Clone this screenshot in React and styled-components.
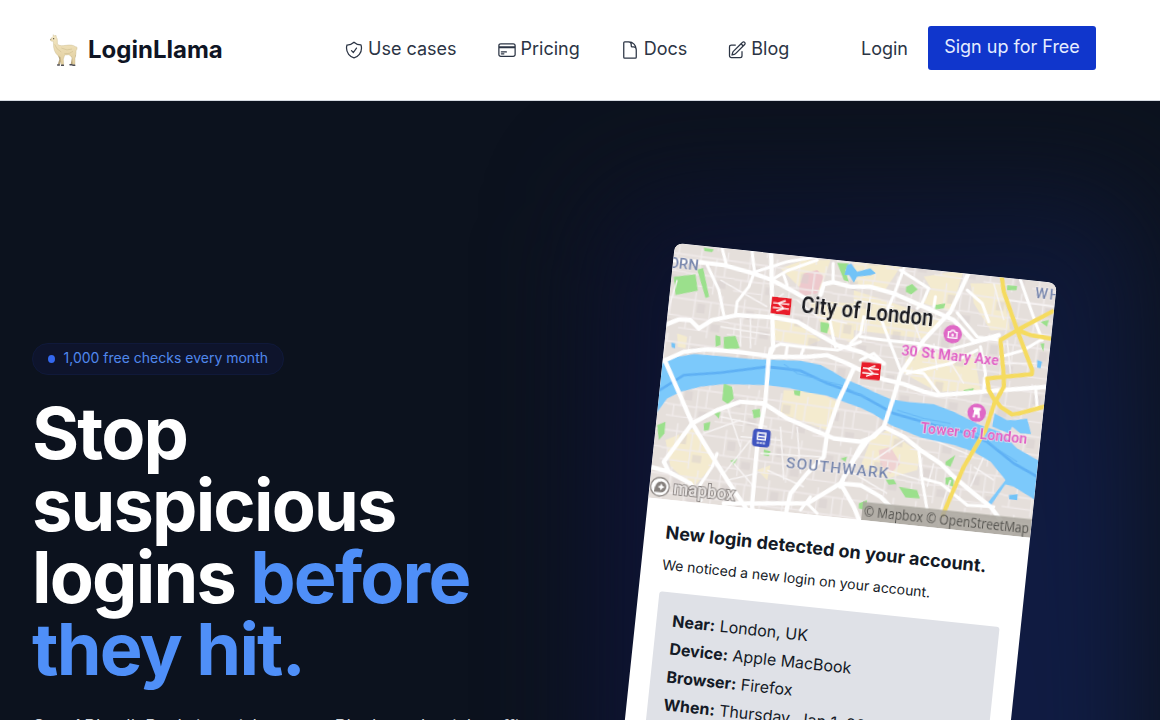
import React from "react";
import styled, { createGlobalStyle } from "styled-components";
import {
  HiOutlineShieldCheck,
  HiOutlineCreditCard,
  HiOutlineDocument,
  HiOutlinePencilSquare,
} from "react-icons/hi2";

const GlobalStyle = createGlobalStyle`
  *, *::before, *::after { box-sizing: border-box; }
  body {
    margin: 0;
    background: #0c121e;
    font-family: Inter, "Liberation Sans", sans-serif;
    overflow: hidden;
  }
  h1, h2, p { margin: 0; }
`;

const Page = styled.div`
  height: 720px;
  overflow: hidden;
  display: flex;
  flex-direction: column;
`;

const Header = styled.header`
  flex: none;
  height: 101px;
  display: flex;
  align-items: flex-start;
  background: #fff;
  border-bottom: 1px solid #d5dae1;
  padding: 26px 64px 0 48px;
  color: #2b3444;
  font-size: 18px;
  line-height: 28px;
`;

const Brand = styled.a`
  width: 296px;
  display: flex;
  align-items: center;
  gap: 8px;
  padding-top: 8px;
  color: #0f1524;
  font-size: 24px;
  line-height: 32px;
  font-weight: 700;
`;

const Nav = styled.nav`
  display: flex;
  gap: 40px;
  padding-top: 9px;
`;

const NavLink = styled.a`
  display: flex;
  align-items: center;
  gap: 4px;

  svg {
    width: 20px;
    height: 20px;
    margin-top: 2px;
  }
`;

const Account = styled.div`
  margin-left: auto;
  display: flex;
  gap: 20px;
`;

const LoginLink = styled.a`
  padding-top: 9px;
`;

const SignUp = styled.a`
  width: 168px;
  height: 44px;
  border-radius: 3px;
  background: #1036cc;
  color: #e6edff;
  text-align: center;
  line-height: 42px;
  white-space: nowrap;
`;

const Hero = styled.main`
  flex: 1;
  min-height: 0;
  display: flex;
  overflow: hidden;
  background: #0c121e;
  padding-left: 32px;
`;

const Pitch = styled.section`
  width: 516px;
  padding-top: 242px;
  flex: none;
`;

const Badge = styled.div`
  display: inline-flex;
  align-items: center;
  gap: 8px;
  width: 252px;
  height: 32px;
  padding: 0 15px;
  border: 1px solid #10193a;
  border-radius: 16px;
  background: #0e142c;
  color: #5088ec;
  font-size: 14px;
  line-height: 20px;
  white-space: nowrap;
`;

const BadgeText = styled.span`
  padding: 0 0 2px 0.5px;
`;

const Dot = styled.i`
  width: 8px;
  height: 8px;
  border-radius: 50%;
  background: #3468ee;
`;

const Title = styled.h1`
  margin-top: 22px;
  color: #fff;
  font-size: 72px;
  line-height: 72px;
  font-weight: 700;
  letter-spacing: -1.8px;

  em {
    font-style: normal;
    color: #4f8ff8;
  }
`;

const Lead = styled.p`
  margin-top: 28px;
  color: #d1d5db;
  font-size: 18px;
  line-height: 28px;
  white-space: nowrap;
`;

const Showcase = styled.section`
  position: relative;
  flex: 1;
  padding: 142px 0 0 126.5px;
`;

const Glow = styled.div`
  position: absolute;
  left: 50px;
  top: 90px;
  width: 545px;
  height: 800px;
  border-radius: 60px;
  background:
    linear-gradient(180deg, rgba(12, 18, 30, 0.4), rgba(12, 18, 30, 0) 300px),
    linear-gradient(100deg, #0d1131, #111f48);
  filter: blur(54px);
`;

const Card = styled.article`
  position: relative;
  width: 384px;
  height: 620px;
  overflow: hidden;
  border-radius: 8px;
  background: #fff;
  transform: rotate(6deg);
  transform-origin: 0 0;
  color: #141a26;
`;

const MapArt = styled.svg`
  display: block;
  width: 384px;
  height: 256px;
  font-family: Roboto, sans-serif;
`;

const CardBody = styled.div`
  padding: 19px 21px;
`;

const CardTitle = styled.h2`
  font-size: 18px;
  line-height: 28px;
  font-weight: 700;
  white-space: nowrap;
`;

const CardNote = styled.p`
  margin-top: 8px;
  font-size: 14px;
  line-height: 20px;
`;

const Details = styled.div`
  margin-top: 17px;
  height: 220px;
  padding: 14px 16px;
  border-radius: 3px;
  background: #dfe1e7;
  font-size: 16px;
  line-height: 28px;
`;

const Detail = styled.p`
  white-space: nowrap;
`;

function Llama() {
  return (
    <svg width="32" height="32" viewBox="54 42 96 96">
      <defs>
        <linearGradient id="wool" x1="0" y1="0" x2="0" y2="1">
          <stop offset="0" stopColor="#f4e8c4" />
          <stop offset="1" stopColor="#e0cc9c" />
        </linearGradient>
      </defs>
      <path d="M118 100L126 113L122 133H129L138 104ZM82 100L88 118L83 134H90L98 105Z" fill="#b5a37c" />
      <path d="M69 50L70 44L74 48L78 46L79 52C83 56 82 64 82 72C88 79 98 77 108 76C119 74 131 75 136 80C143 79 142 88 138 92C139 102 136 108 135 114L135 134H128L126 112L117 104L104 105L100 118L101 135H94L91 112C80 106 73 96 71 82L70 64L63 63C60 60 61 55 66 53Z" fill="url(#wool)" stroke="#c6b588" strokeWidth="1.2" />
      <path d="M74 73Q78 88 94 96M94 84Q112 94 126 87M103 101Q119 103 129 94" fill="none" stroke="#cfbd90" strokeWidth="1.8" />
      <circle cx="71" cy="56" r="1.8" fill="#3e3833" />
      <path d="M61 59L64 58" stroke="#74675b" strokeWidth="2.2" />
      <path d="M83 135H88M95 136H100M120 134H126M129 136H134" stroke="#4f4f56" strokeWidth="4.5" strokeLinecap="round" />
    </svg>
  );
}

const majorRoads = [
  "M95 60L170 65L250 75L340 100L395 120L460 155L490 172",
  "M392 40L395 200L398 325L385 350L375 480L350 620L335 790V830",
  "M80 252L115 238L150 240L175 265L215 240L290 225L400 232L470 245L520 275L590 315L660 335L730 370",
  "M70 362L130 335L200 328L290 335L400 350L500 350L560 345L620 370L660 390L730 418L790 432L850 455L890 465L960 460L1060 452L1220 440",
  "M75 365L125 480L155 550L210 640L260 720L320 810",
  "M155 550L230 510L300 485L370 490L440 535L520 570L580 595L660 605L700 590L730 560",
  "M155 550L70 665L85 695L150 730L180 780M30 680L85 695",
  "M640 385L595 480L560 580L550 650L500 700L450 760L436 820",
  "M984 100L930 215L850 300L780 400L760 470L730 560L660 620L610 710L600 740",
  "M540 165L550 132L578 126L630 140L690 140L760 160L850 200L940 240L1000 305L1075 285",
  "M730 560L790 590L840 630L900 670L940 710L1000 760L1050 800L1080 840",
  "M250 790H500L600 730L640 660L675 610",
  "M600 730L660 735L720 770L755 805M600 730L640 800L660 850",
];

const minorRoads = [
  "M200 75L235 150L250 225M340 100L325 140L290 185L285 225",
  "M245 25L258 75M335 35L342 95M342 96L440 65L530 50M400 115L440 92L530 60M430 105L440 135",
  "M578 70L578 125M630 310L660 280L670 230",
  "M385 350L390 325L420 312L480 320L590 330L660 305M440 320L435 350M490 322L480 350",
  "M568 240L578 290L585 320M660 360L700 340L730 370",
  "M790 85L760 165L725 245L755 325L780 390L850 400L900 465",
  "M780 90L865 145L845 190L830 205M885 170L880 200",
  "M980 150L1025 190L1045 245M950 218L1010 290L1075 300",
  "M660 290L730 300L830 310L920 330L1070 290M800 400L930 370L1010 330M1020 320L1035 400L1030 450",
  "M1140 120L1175 220L1205 300M1080 350L1150 330L1200 300M1185 440L1190 500L1170 510",
  "M230 640L215 680L175 740M835 630L845 720L860 810M845 715L900 730L980 795L1060 800",
  "M500 790L530 820M480 810L510 770",
];

const laneRoads = [
  "M240 120L380 200M300 235V320M330 235V325M240 260L390 285M110 120L80 220M430 160L390 190M470 180L530 230L620 250",
  "M640 180L760 200M690 170L670 280M800 190L840 300M840 220L900 240M920 350L970 430M880 310L890 390",
  "M1060 130L1090 240M1100 180L1240 200M1090 370L1190 370M1100 300L1110 400",
  "M240 530L380 560M260 500L300 620M300 590L420 600M190 580L300 540M330 600L250 700M420 560L430 720M470 560L480 700M360 640L540 650",
  "M280 670L340 740M260 720L350 700M380 690L490 740M700 660L790 600M740 690L840 720M640 700L740 760M880 670L860 740M930 720L900 810M1000 680L1060 720M1030 650L990 740M880 600L1000 650",
];

const yellowRoads = [
  "M1084 110L1090 155L1130 270L1175 390L1174 402L1040 415L1045 450L1065 485L1090 440V410L1080 300L1130 270L1240 212",
  "M1130 270L1170 285L1240 297",
  "M1065 480L1080 500L1115 523L1140 519L1240 492",
  "M1065 480L1035 570L970 680L930 770L905 830",
];

const parks = [
  "M100 110L165 103L172 152L105 165Z", "M170 88L188 84L206 170L195 174Z",
  "M225 285L240 290L240 315L225 320ZM250 290L285 287L298 325L250 328Z",
  "M190 22L220 28L215 36L192 33ZM590 68L625 70L615 90L625 125L610 120Z",
  "M797 140L815 132L832 148L812 163L796 155Z", "M1100 135L1130 138L1128 150L1100 150Z",
  "M540 245L568 250L560 280L540 275Z", "M50 555L75 545L72 580L55 600Z",
  "M250 430L275 440L280 475L262 492L245 480Z", "M190 550L210 545L205 570L190 572Z",
  "M335 510L358 506L360 530L340 535Z", "M460 450L480 452L478 468L462 464Z",
  "M370 628L390 634L385 648L370 646ZM270 662L290 655L280 675Z",
  "M915 665L945 645L930 680L915 675ZM915 712L940 710L938 740L915 732Z",
  "M735 718L760 718L768 732L745 734ZM775 740L830 750L838 775L795 772Z",
  "M970 450L1000 444L995 462L970 460ZM1200 245L1225 240L1220 260ZM1200 310L1212 310L1208 335Z",
  "M880 195L915 190L910 205L885 208ZM220 520L240 515L235 535Z",
  "M655 790L680 780L675 810L655 805ZM600 655L620 650L615 665Z",
];

const creamAreas = [
  "M75 600L160 565L222 650L205 690L160 740L90 680Z",
  "M420 85L490 60L570 60L540 150L500 165L470 135Z",
  "M400 240L470 250L540 300L500 318L400 300Z",
  "M640 50L780 80L730 155L640 130Z",
  "M850 110L970 90L930 215L850 190L872 145Z",
  "M990 130L1080 130L1110 270L1050 270L1000 190Z",
  "M640 150L910 240L850 295L640 270Z",
  "M430 450L530 455L590 485L560 570L420 520Z",
  "M800 330L1000 340L1020 450L890 455L790 400Z",
  "M690 600L740 570L840 640L830 690L740 715L660 680Z",
  "M350 690L390 675L380 720ZM110 280L140 290L135 325L112 320Z",
  "M500 180L640 190L640 310L560 280Z",
];

function RailMark({ x, y }) {
  return (
    <g transform={`translate(${x} ${y})`}>
      <rect x="-10" y="-8.5" width="20" height="17" rx="0.8" fill="#e91f2b" />
      <path d="M-8 -2.2H8M-8 2.4H8M4 -5.5L-3 -2.2L3 2.4L-4 5.5" fill="none" stroke="#fff" strokeWidth="1.3" />
    </g>
  );
}

function LondonMap() {
  return (
    <MapArt viewBox="0 0 384 256">
      <defs>
        <pattern id="streets" width="148" height="132" patternUnits="userSpaceOnUse" patternTransform="rotate(8)">
          <path d="M0 24H148M0 78H88M40 0V78M88 24V132M120 0V24M0 112H88M20 78V112M116 76V24M88 76H148" fill="none" stroke="#f1ecec" strokeWidth="4" />
          <path d="M48 32H72V60H48ZM96 88H124V110H96Z" fill="#d8d0cf" opacity=".5" />
        </pattern>
        <filter id="soften" x="0" y="0" width="1" height="1">
          <feGaussianBlur stdDeviation="0.4" edgeMode="duplicate" />
        </filter>
      </defs>
      <g filter="url(#soften)">
        <rect width="384" height="256" fill="#e5dfdb" />
        <g transform="translate(1 0) rotate(-6) translate(-35.5 -3) scale(.33333)">
          {creamAreas.map((d) => <path key={d} d={d} fill="#f4ebcf" />)}
          <path d="M490 100L530 90L550 110L530 160L480 168L475 145Z" fill="#edc9cd" />
          <path d="M715 630L750 620L780 670L750 700L720 675Z" fill="#efd2d2" />
          <rect x="-50" y="-50" width="1350" height="950" fill="url(#streets)" />
          {parks.map((d) => <path key={d} d={d} fill="#9be08c" />)}
          <g fill="none" stroke="#f7f4f4" strokeWidth="4.5">
            {laneRoads.map((d) => <path key={d} d={d} />)}
          </g>
          <path
            d="M40 374L100 352L160 342L240 348L330 357L480 362L540 374L580 396L610 415L660 436L700 455L750 477L800 485L880 492L940 515L1020 555L1080 575L1130 625L1200 665V790L1120 740L1095 733L1048 800L1038 793L1095 720L1050 665L1000 635L940 615L840 592L750 555L700 522L660 503L600 482L560 467L500 457L450 445L380 435L250 432L180 440L120 455L80 475L40 530Z"
            fill="#7bc9fb"
          />
          <path d="M50 455L130 405L240 398L380 380L480 392L560 430L660 465L760 520L880 555L950 570L1040 605L1120 670L1200 715" fill="none" stroke="#5eb0f4" strokeWidth="8" />
          <path d="M430 372L470 400L600 435L680 475M770 510L850 535L930 550M1000 570L1060 620L1130 665" fill="none" stroke="#67b7f5" strokeWidth="3" />
          <path d="M1062 520L1100 540L1125 540L1160 535L1172 582L1140 580L1115 560L1105 580L1055 560Z" fill="#7bc9fb" />
          <path d="M620 75L632 70L650 95L690 85L706 100L690 106L650 110L640 128L626 105L612 104ZM1105 765L1132 762L1130 780L1106 778ZM92 308L104 310L104 325L94 322ZM1190 360L1205 365L1200 385L1190 382Z" fill="#72c3f7" />
          <g fill="none" stroke="#fff" strokeLinejoin="round" strokeLinecap="round">
            {majorRoads.map((d) => <path key={d} d={d} strokeWidth="13" />)}
            {minorRoads.map((d) => <path key={d} d={d} strokeWidth="9" />)}
          </g>
          <g fill="none" stroke="#f5db5f" strokeWidth="13" strokeLinejoin="round">
            {yellowRoads.map((d) => <path key={d} d={d} />)}
          </g>
        </g>

        <g transform="translate(.9 0)">
          <g fill="#7585ad" fontSize="14.5" fontWeight="500" stroke="#f0ecea" strokeWidth="1" paintOrder="stroke">
            <text x="-5" y="25" textLength="30" lengthAdjust="spacingAndGlyphs">ORN</text>
            <text x="362.5" y="17" letterSpacing="1.5">WH</text>
            <text x="132.5" y="212.5" fontSize="15.5" textLength="103" lengthAdjust="spacing">SOUTHWARK</text>
          </g>
          <text x="131" y="56" fontSize="23" fontWeight="700" fill="#1a1b20" stroke="#fff" strokeWidth="1.2" paintOrder="stroke" textLength="133" lengthAdjust="spacingAndGlyphs">City of London</text>
          <g fill="#e062c6" fontSize="15.5" fontWeight="700" stroke="#f6e8ee" strokeWidth="1" paintOrder="stroke">
            <text x="235.5" y="88" textLength="98" lengthAdjust="spacingAndGlyphs">30 St Mary Axe</text>
            <text x="262.5" y="163.5" fontSize="15" textLength="107.5" lengthAdjust="spacingAndGlyphs">Tower of London</text>
          </g>
          <RailMark x={111.2} y={51.4} />
          <RailMark x={207.1} y={106.9} />
          <g transform="translate(284.8 61.6)">
            <circle r="9.3" fill="#df68c6" />
            <path d="M-4.3 3.7V-2H-2.5L-1 -3.8H1L2.5 -2H4.3V3.7Z" fill="none" stroke="#fff" strokeWidth="1.3" />
            <circle cy="1" r="1.3" fill="#fff" />
          </g>
          <g transform="translate(316.9 137.3)">
            <circle r="9.3" fill="#df68c6" />
            <path d="M-3.7 -5H3.7V-2.5H2.6L3.6 5H1.5V2H-1.5V5H-3.6L-2.6 -2.5H-3.7Z" fill="#fff" />
          </g>
          <g transform="translate(105.4 185)">
            <rect x="-9" y="-9" width="18" height="18" rx="4" fill="#4055c0" />
            <path d="M-4 -5H4V1.5H-4ZM-4 -1.5H4" fill="none" stroke="#fff" strokeWidth="1.3" />
            <path d="M-4 5H4" stroke="#c8cfee" strokeWidth="2" strokeDasharray="2 1" />
          </g>
        </g>
        <circle cx="10.5" cy="244" r="9.3" fill="#fff" stroke="#8d8784" strokeWidth="1.4" />
        <path d="M5 249.5Q5 238.5 11.5 238.5A5.3 5.3 0 0 1 11.5 249.5Z" fill="#85807d" />
        <path d="M11.8 240.5L12.9 243L15.3 244L12.9 245.2L11.8 247.5L10.7 245.2L8.3 244L10.7 243Z" fill="#fff" />
        <text x="24" y="250" fontSize="18.5" fontWeight="500" fill="#e9e5e3" stroke="#8b8583" strokeWidth="2" paintOrder="stroke" textLength="62" lengthAdjust="spacingAndGlyphs">mapbox</text>
        <rect x="214" y="237.5" width="170" height="18.5" fill="#a9a69d" opacity=".85" />
        <text x="216" y="251.5" fontFamily="Open Sans, sans-serif" fontSize="14" fill="#504f4b" textLength="166" lengthAdjust="spacingAndGlyphs">© Mapbox © OpenStreetMap</text>
      </g>
    </MapArt>
  );
}

const links = [
  [HiOutlineShieldCheck, "Use cases"],
  [HiOutlineCreditCard, "Pricing"],
  [HiOutlineDocument, "Docs"],
  [HiOutlinePencilSquare, "Blog"],
];

const details = [
  ["Near:", "London, UK"],
  ["Device:", "Apple MacBook"],
  ["Browser:", "Firefox"],
  ["When:", "Thursday, Jan 1, 2026"],
];

export default function App() {
  return (
    <Page>
      <GlobalStyle />
      <Header>
        <Brand>
          <Llama />
          LoginLlama
        </Brand>
        <Nav>
          {links.map(([Icon, label]) => (
            <NavLink key={label}>
              <Icon />
              {label}
            </NavLink>
          ))}
        </Nav>
        <Account>
          <LoginLink>Login</LoginLink>
          <SignUp>Sign up for Free</SignUp>
        </Account>
      </Header>
      <Hero>
        <Pitch>
          <Badge>
            <Dot />
            <BadgeText>1,000 free checks every month</BadgeText>
          </Badge>
          <Title>
            Stop<br />suspicious<br />logins <em>before<br />they hit.</em>
          </Title>
          <Lead>One API call. Real-time risk scores. Block credential stuffing</Lead>
        </Pitch>
        <Showcase>
          <Glow />
          <Card>
            <LondonMap />
            <CardBody>
              <CardTitle>New login detected on your account.</CardTitle>
              <CardNote>We noticed a new login on your account.</CardNote>
              <Details>
                {details.map(([name, value]) => (
                  <Detail key={name}>
                    <b>{name}</b> {value}
                  </Detail>
                ))}
              </Details>
            </CardBody>
          </Card>
        </Showcase>
      </Hero>
    </Page>
  );
}
